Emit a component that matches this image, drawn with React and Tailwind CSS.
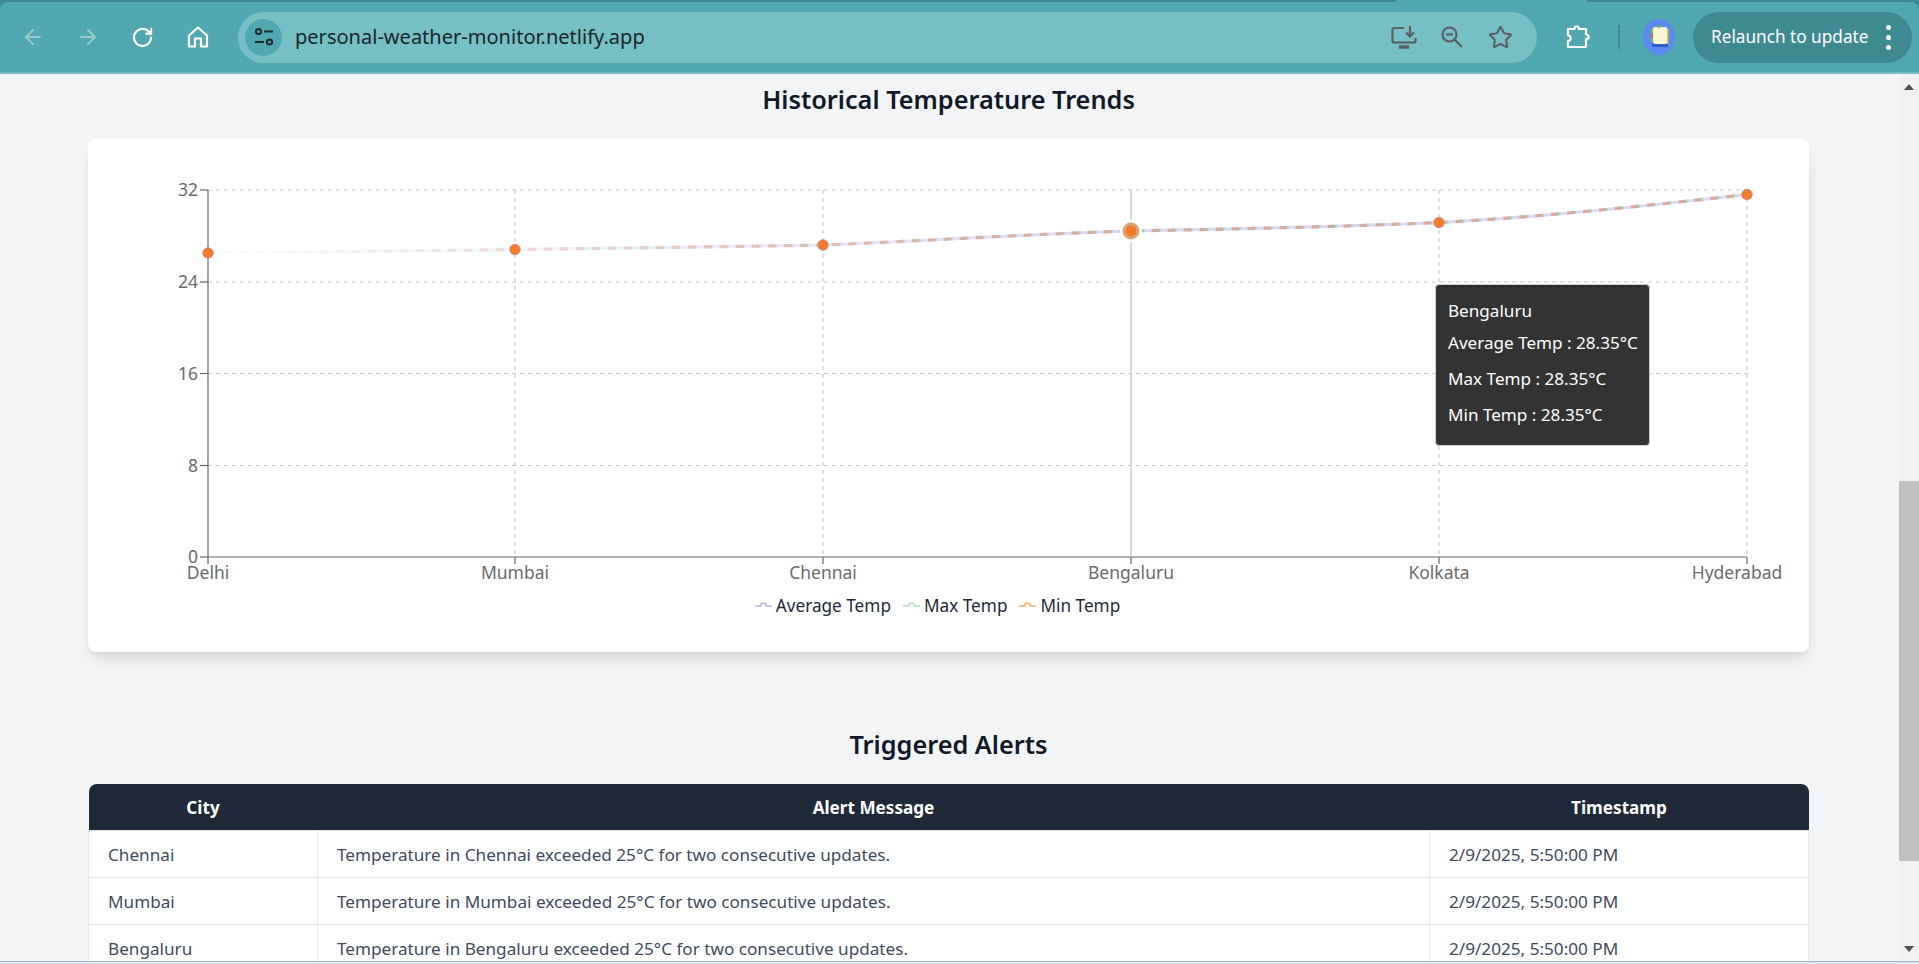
import React from "react";
import { ArrowLeft, ArrowRight, RotateCw, Star } from "lucide-react";

const FONT = "font-['Noto_Sans','Open_Sans',sans-serif]";

const points = [
    { x: 208, y: 253, label: "Delhi" },
    { x: 515, y: 249.5, label: "Mumbai" },
    { x: 823, y: 245, label: "Chennai" },
    { x: 1131, y: 231, label: "Bengaluru" },
    { x: 1439, y: 222.5, label: "Kolkata" },
    { x: 1747, y: 194.5, label: "Hyderabad" },
];

const yTicks = [
    { y: 190, label: "32" },
    { y: 282, label: "24" },
    { y: 373.5, label: "16" },
    { y: 465.5, label: "8" },
    { y: 557, label: "0" },
];

const linePath = "M208 253 C310 252 413 251 515 249.5 C618 248 720 247 823 245 C926 241 1028 234 1131 231 C1234 229 1336 227 1439 222.5 C1542 217 1644 206 1747 194.5";

const alerts = ["Chennai", "Mumbai", "Bengaluru"];

const ToolbarIcon = ({ children }) => (
    <div className="w-[55px] flex items-center justify-center text-white">{children}</div>
);

const OmniIcon = ({ children }) => (
    <div className="w-[48px] flex items-center justify-center text-[#5a5f63]">{children}</div>
);

const HomeIcon = () => (
    <svg width="22" height="24" viewBox="0 0 22 24" fill="none" stroke="currentColor" strokeWidth="2.2">
        <path d="M2 10.5 L11 2.5 L20 10.5 V21.5 H14 V13.5 H8 V21.5 H2 Z" strokeLinejoin="round" />
    </svg>
);

const SiteInfoIcon = () => (
    <svg width="20" height="20" viewBox="0 0 20 20" fill="none" stroke="#1d2b30" strokeWidth="2">
        <circle cx="4.5" cy="4.5" r="2.6" />
        <path d="M10 4.5 H19" />
        <path d="M1 15 H10" />
        <circle cx="15.5" cy="15" r="2.6" />
    </svg>
);

const InstallIcon = () => (
    <svg width="26" height="24" viewBox="0 0 26 24" fill="none" stroke="currentColor" strokeWidth="2.2">
        <path d="M13 3 H3 A1.5 1.5 0 0 0 1.5 4.5 V16 A1.5 1.5 0 0 0 3 17.5 H23 A1.5 1.5 0 0 0 24.5 16 V13" />
        <path d="M19 1 V11 M15 7.5 L19 11.5 L23 7.5" />
        <path d="M8 22 H18" strokeWidth="3.5" />
    </svg>
);

const ZoomOutIcon = () => (
    <svg width="24" height="24" viewBox="0 0 24 24" fill="none" stroke="currentColor" strokeWidth="2.2">
        <circle cx="9.5" cy="9.5" r="7" />
        <path d="M6 9.5 H13" />
        <path d="M14.5 14.5 L22 22" />
    </svg>
);

const PuzzleIcon = () => (
    <svg width="26" height="26" viewBox="0 0 26 26" fill="none" stroke="currentColor" strokeWidth="2.2" strokeLinejoin="round">
        <path d="M3 5 H9.5 C9.5 1.5 14 1.5 14 5 H21 V10.5 C24.5 10.5 24.5 15 21 15 V23 H3 V17 C6.5 17 6.5 11.5 3 11.5 Z" />
    </svg>
);

const AvatarIcon = () => (
    <svg width="32" height="36" viewBox="0 0 32 36">
        <ellipse cx="16" cy="18" rx="16" ry="18" fill="#5a8bf0" />
        <rect x="9" y="24" width="16" height="4" rx="1" fill="#2f5fc4" />
        <rect x="8" y="9" width="3" height="14" rx="1.5" fill="#6cc04a" />
        <rect x="8.5" y="14" width="2" height="5" fill="#e2574c" />
        <rect x="22.5" y="9" width="3" height="16" rx="1.5" fill="#f4c430" />
        <rect x="10" y="8" width="14" height="17" rx="2" fill="#fff6d8" />
        <circle cx="16" cy="7.5" r="1.6" fill="#6cc04a" />
    </svg>
);

const LegendIcon = ({ color }) => (
    <svg width="17" height="10" viewBox="0 0 17 10" fill="none" stroke={color} strokeOpacity="0.6" strokeWidth="1.6">
        <path d="M0 6 H5.5 A3 3 0 0 1 11.5 6 H17" />
    </svg>
);

const Scrollbar = () => (
    <div className="w-[20px] shrink-0 bg-[#f1f1f1] flex flex-col items-center">
        <div className="h-[26px] flex items-center justify-center">
            <div className="w-0 h-0 border-x-[5px] border-x-transparent border-b-[6px] border-b-[#505050]" />
        </div>
        <div className="w-full h-[380px] mt-[381px] bg-[#c1c1c1]" />
        <div className="mt-auto h-[24px] flex items-center justify-center">
            <div className="w-0 h-0 border-x-[5px] border-x-transparent border-t-[6px] border-t-[#505050]" />
        </div>
    </div>
);

const Chart = () => (
    <svg className="block w-full h-[451px]" viewBox="88 139 1721 451" fontSize="17.5" fill="#6b6b6b">
        <defs>
            <linearGradient id="fadeLilac" gradientUnits="userSpaceOnUse" x1="260" y1="0" x2="1131" y2="0">
                <stop offset="0" stopColor="#8884d8" stopOpacity="0.02" />
                <stop offset="1" stopColor="#8884d8" stopOpacity="0.3" />
            </linearGradient>
            <linearGradient id="fadeGreen" gradientUnits="userSpaceOnUse" x1="260" y1="0" x2="1131" y2="0">
                <stop offset="0" stopColor="#82ca9d" stopOpacity="0.02" />
                <stop offset="1" stopColor="#82ca9d" stopOpacity="0.5" />
            </linearGradient>
            <linearGradient id="fadeOrange" gradientUnits="userSpaceOnUse" x1="260" y1="0" x2="1131" y2="0">
                <stop offset="0" stopColor="#e0703a" stopOpacity="0.02" />
                <stop offset="1" stopColor="#d9906a" stopOpacity="0.65" />
            </linearGradient>
        </defs>

        {/* grid */}
        <g stroke="#ccc" strokeWidth="1.2" strokeDasharray="4 4" fill="none">
            {yTicks.slice(0, 4).map((t) => (
                <line key={t.label} x1="208" y1={t.y} x2="1747" y2={t.y} />
            ))}
            {points.slice(1).map((p) => (
                <line key={p.label} x1={p.x} y1="190" x2={p.x} y2="557" />
            ))}
        </g>

        {/* axes */}
        <g stroke="#666" strokeWidth="1.2">
            <line x1="208" y1="190" x2="208" y2="557" />
            <line x1="208" y1="557" x2="1747" y2="557" />
            {yTicks.map((t) => (
                <line key={t.label} x1="200" y1={t.y} x2="208" y2={t.y} />
            ))}
            {points.map((p) => (
                <line key={p.label} x1={p.x} y1="557" x2={p.x} y2="564" />
            ))}
        </g>
        {yTicks.map((t) => (
            <text key={t.label} x="198" y={t.y + 6} textAnchor="end">{t.label}</text>
        ))}
        {points.map((p, i) => (
            <text key={p.label} x={i === 5 ? 1737 : p.x} y="579" textAnchor="middle">{p.label}</text>
        ))}

        {/* hover cursor */}
        <line x1="1131" y1="190" x2="1131" y2="557" stroke="#d4d4d4" strokeWidth="1.6" />

        {/* the three series sit on top of each other */}
        <g fill="none" strokeWidth="3.2">
            <path d={linePath} stroke="url(#fadeLilac)" />
            <path d={linePath} stroke="url(#fadeGreen)" strokeDasharray="3 13" strokeDashoffset="10" />
            <path d={linePath} stroke="url(#fadeOrange)" strokeDasharray="7 9" />
        </g>

        {points.map((p) => (
            p.label === "Bengaluru" ? (
                <g key={p.label}>
                    <circle cx={p.x} cy={p.y} r="11" fill="#fff" />
                    <circle cx={p.x} cy={p.y} r="8.5" fill="#d9a57c" />
                    <circle cx={p.x} cy={p.y} r="5.5" fill="#f47b2a" />
                </g>
            ) : (
                <circle key={p.label} cx={p.x} cy={p.y} r="5.4" fill="#f47b2a" stroke="#b49ac0" strokeWidth="0.6" />
            )
        ))}
    </svg>
);

const Tooltip = () => (
    <div className="absolute left-[1347px] top-[145px] w-[215px] h-[162px] bg-[#333] border border-[#ccc] rounded-[4px] pl-[12px] pt-[13px] text-[17.1px] leading-[26px] text-white">
        <div className="mb-[6px]">Bengaluru</div>
        <div className="mb-[10px]">Average Temp : 28.35°C</div>
        <div className="mb-[10px]">Max Temp : 28.35°C</div>
        <div>Min Temp : 28.35°C</div>
    </div>
);

const App = () => {
    return (
        <div className={`h-[964px] w-full overflow-hidden flex flex-col bg-[#f3f4f6] ${FONT}`}>
            {/* browser chrome */}
            <div className="shrink-0 bg-[#3f8a90]">
                <div className="h-[2px] relative">
                    <div className="absolute left-[1396px] w-[191px] h-[2px] bg-[#52a8b0]" />
                </div>
                <div className="h-[72px] bg-[#52a8b0] border-b-2 border-[#76bfc5] rounded-t-lg flex items-center pl-[5px]">
                    <ToolbarIcon><ArrowLeft size={24} strokeWidth={1.8} className="opacity-40" /></ToolbarIcon>
                    <ToolbarIcon><ArrowRight size={24} strokeWidth={1.8} className="opacity-40" /></ToolbarIcon>
                    <ToolbarIcon><RotateCw size={23} strokeWidth={2.2} /></ToolbarIcon>
                    <ToolbarIcon><HomeIcon /></ToolbarIcon>
                    <div className="ml-[13px] w-[1299px] h-[51px] rounded-full bg-[#76bfc5] flex items-center pl-[7px]">
                        <div className="w-[37px] h-[37px] rounded-full bg-[#52a8b0] flex items-center justify-center">
                            <SiteInfoIcon />
                        </div>
                        <span className="ml-[13px] mt-[1px] text-[20.05px] text-[#16262b]">personal-weather-monitor.netlify.app</span>
                        <div className="ml-auto mr-[13px] flex">
                            <OmniIcon><InstallIcon /></OmniIcon>
                            <OmniIcon><ZoomOutIcon /></OmniIcon>
                            <OmniIcon><Star size={25} strokeWidth={2} /></OmniIcon>
                        </div>
                    </div>
                    <div className="ml-[17px] w-[48px] flex justify-center text-white"><PuzzleIcon /></div>
                    <div className="ml-[16px] w-[2px] h-[24px] bg-[#3f8a91]" />
                    <div className="ml-[23px] flex"><AvatarIcon /></div>
                    <div className="ml-[18px] w-[219px] h-[51px] rounded-full bg-[#3f8a91] flex items-center pl-[18px] text-white text-[17.2px]">
                        <span>Relaunch to update</span>
                        <div className="ml-[18px] flex flex-col gap-[5px]">
                            <span className="w-[5px] h-[5px] rounded-full bg-white" />
                            <span className="w-[5px] h-[5px] rounded-full bg-white" />
                            <span className="w-[5px] h-[5px] rounded-full bg-white" />
                        </div>
                    </div>
                </div>
            </div>

            {/* page */}
            <div className="flex-1 min-h-0 flex">
                <main className="flex-1 min-w-0 overflow-hidden pl-[88px] pr-[90px] pt-[9px]">
                    <h2 className="text-[25.3px] leading-[32px] font-semibold text-center text-[#111827] mb-[24px]">Historical Temperature Trends</h2>
                    <div className="relative bg-white rounded-lg shadow-lg h-[513px]">
                        <Chart />
                        <div className="h-[31px] pr-[22px] flex items-center justify-center text-[17.2px] text-[#1f2937]">
                            <div className="flex items-center mr-[12px]"><LegendIcon color="#8884d8" /><span className="ml-[4px]">Average Temp</span></div>
                            <div className="flex items-center mr-[12px]"><LegendIcon color="#82ca9d" /><span className="ml-[4px]">Max Temp</span></div>
                            <div className="flex items-center"><LegendIcon color="#ff7300" /><span className="ml-[4px]">Min Temp</span></div>
                        </div>
                        <Tooltip />
                    </div>

                    <h2 className="mt-[76px] mb-[24px] text-[25.3px] leading-[32px] font-semibold text-center text-[#111827]">Triggered Alerts</h2>
                    <table className="w-[1720px] table-fixed border-collapse bg-white text-[17.15px] text-[#414b5c]">
                        <thead>
                            <tr className="h-[46px] bg-[#1f2937] text-white">
                                <th className="w-[229px] pt-[2px] font-bold rounded-tl-lg">City</th>
                                <th className="w-[1112px] pt-[2px] font-bold">Alert Message</th>
                                <th className="w-[379px] pt-[2px] font-bold rounded-tr-lg">Timestamp</th>
                            </tr>
                        </thead>
                        <tbody>
                            {alerts.map((city) => (
                                <tr key={city} className="h-[47px]">
                                    <td className="border border-[#e5e7eb] px-[19px] pt-[2px]">{city}</td>
                                    <td className="border border-[#e5e7eb] px-[19px] pt-[2px]">Temperature in {city} exceeded 25°C for two consecutive updates.</td>
                                    <td className="border border-[#e5e7eb] px-[19px] pt-[2px]">2/9/2025, 5:50:00 PM</td>
                                </tr>
                            ))}
                        </tbody>
                    </table>
                </main>
                <Scrollbar />
            </div>

            {/* edge of the taskbar */}
            <div className="shrink-0 h-[3px] bg-[#dfe8f2] border-t border-[#a9b8c8]" />
        </div>
    );
};

export default App;
